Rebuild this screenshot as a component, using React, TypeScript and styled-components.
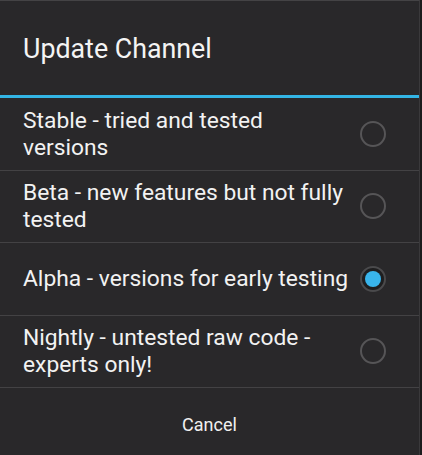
import { useState } from "react";
import styled, { createGlobalStyle } from "styled-components";

const GlobalStyle = createGlobalStyle`
  html, body {
    margin: 0;
    padding: 0;
    background: #1c1c1d;
  }
  body {
    font-family: Roboto, "Noto Sans", sans-serif;
  }
`;

const Dialog = styled.div`
  width: 420px;
  height: 455px;
  background: #29282a;
  border-top: 1px solid #444345;
  border-right: 1px solid #3a393b;
  box-sizing: border-box;
  display: flex;
  flex-direction: column;
`;

const Title = styled.h1`
  margin: 0;
  height: 94px;
  box-sizing: border-box;
  padding: 2px 23px 0;
  display: flex;
  align-items: center;
  font-size: 26.8px;
  font-weight: 400;
  color: #f4f4f4;
`;

const Divider = styled.div`
  height: 3px;
  background: #33b5e5;
`;

const List = styled.div`
  display: flex;
  flex-direction: column;
`;

const Row = styled.label`
  height: 72.5px;
  box-sizing: border-box;
  border-bottom: 1px solid #434244;
  display: flex;
  align-items: center;
  justify-content: space-between;
  padding: 0 33px 0 23px;
  cursor: pointer;
`;

const RowText = styled.span`
  width: 328px;
  font-size: 22.8px;
  line-height: 27px;
  color: #f2f2f2;
`;

const Radio = styled.span<{ $on: boolean }>`
  width: 26px;
  height: 26px;
  box-sizing: border-box;
  border-radius: 50%;
  border: 2px solid ${(p) => (p.$on ? "#4a4a4c" : "#565557")};
  background: ${(p) => (p.$on ? "#1e1e1f" : "transparent")};
  display: flex;
  align-items: center;
  justify-content: center;
  flex-shrink: 0;
`;

const Dot = styled.span`
  width: 16px;
  height: 16px;
  border-radius: 50%;
  background: #39b5ec;
`;

const Footer = styled.div`
  flex: 1;
  display: flex;
  align-items: center;
  justify-content: center;
`;

const CancelButton = styled.button`
  background: none;
  border: none;
  font-family: inherit;
  font-size: 18px;
  color: #f0f0f0;
  padding: 10px 20px;
  margin-top: 6px;
`;

const options = [
  "Stable - tried and tested versions",
  "Beta - new features but not fully tested",
  "Alpha - versions for early testing",
  "Nightly - untested raw code - experts only!",
];

export default function App() {
  const [selected, setSelected] = useState(2);
  return (
    <>
      <GlobalStyle />
      <Dialog>
        <Title>Update Channel</Title>
        <Divider />
        <List>
          {options.map((o, i) => (
            <Row key={o} onClick={() => setSelected(i)}>
              <RowText>{o}</RowText>
              <Radio $on={selected === i}>{selected === i && <Dot />}</Radio>
            </Row>
          ))}
        </List>
        <Footer>
          <CancelButton>Cancel</CancelButton>
        </Footer>
      </Dialog>
    </>
  );
}
